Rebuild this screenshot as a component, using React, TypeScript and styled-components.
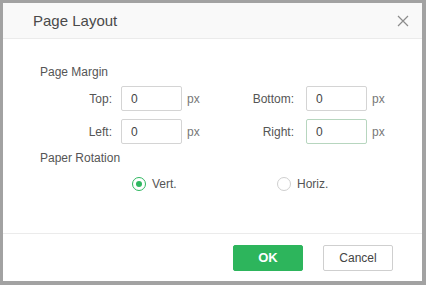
import React, { useState } from 'react';
import styled, { createGlobalStyle } from 'styled-components';

const GlobalStyle = createGlobalStyle`
  html, body {
    margin: 0;
    padding: 0;
    background: #a2a2a2;
    font-family: "Liberation Sans", Arial, sans-serif;
  }
`;

const Screen = styled.div`
  width: 426px;
  height: 285px;
  box-sizing: border-box;
  padding: 3px 4px 4px 3px;
  background: #a2a2a2;
`;

const Dialog = styled.div`
  width: 419px;
  height: 278px;
  background: #fff;
  display: flex;
  flex-direction: column;
`;

const Header = styled.div`
  height: 35px;
  flex: none;
  background: #f9f9f9;
  border-bottom: 1px solid #ebebeb;
  display: flex;
  align-items: center;
  justify-content: space-between;
  padding: 0 13px 0 30px;
  box-sizing: content-box;
`;

const Title = styled.div`
  font-size: 15px;
  color: #4a4a4a;
`;

const Close = styled.button`
  border: none;
  background: none;
  padding: 0;
  width: 12px;
  height: 12px;
  display: flex;
  cursor: pointer;
`;

const Body = styled.div`
  flex: 1;
  padding: 25px 0 0 37px;
`;

const SectionTitle = styled.div<{ $gap?: number }>`
  font-size: 12px;
  line-height: 16px;
  color: #555;
  margin-top: ${(p) => p.$gap ?? 0}px;
`;

const Fields = styled.div`
  margin-top: 6px;
  display: grid;
  grid-template-columns: 81px 61px 40px 84px 61px auto;
  grid-auto-rows: 25px;
  row-gap: 8px;
  align-items: center;
`;

const Label = styled.label<{ $pad: number }>`
  font-size: 12px;
  color: #555;
  text-align: right;
  padding-right: ${(p) => p.$pad}px;
`;

const Input = styled.input<{ $active?: boolean }>`
  width: 61px;
  height: 25px;
  box-sizing: border-box;
  border: 1px solid ${(p) => (p.$active ? '#b7d6bf' : '#d4d4d4')};
  border-radius: 2px;
  padding: 0 0 0 9px;
  font: 12px "Liberation Sans", Arial, sans-serif;
  color: #444;
  outline: none;
`;

const Unit = styled.span`
  font-size: 12px;
  color: #777;
  padding-left: 5px;
`;

const Radios = styled.div`
  margin-top: 10px;
  padding-left: 92px;
  display: flex;
`;

const RadioOption = styled.label`
  width: 147px;
  display: flex;
  align-items: center;
  gap: 6px;
  font-size: 12px;
  color: #555;
  cursor: pointer;
  height: 16px;
`;

const Circle = styled.span<{ $on: boolean }>`
  width: 14px;
  height: 14px;
  box-sizing: border-box;
  border-radius: 50%;
  border: 1px solid ${(p) => (p.$on ? '#2fb760' : '#cfcfcf')};
  display: flex;
  align-items: center;
  justify-content: center;
  &::after {
    content: '';
    width: 6px;
    height: 6px;
    border-radius: 50%;
    background: #2fb760;
    display: ${(p) => (p.$on ? 'block' : 'none')};
  }
`;

const Footer = styled.div`
  height: 47px;
  flex: none;
  border-top: 1px solid #ebebeb;
  display: flex;
  align-items: center;
  justify-content: flex-end;
  gap: 20px;
  padding-right: 29px;
`;

const Button = styled.button<{ $primary?: boolean }>`
  width: 70px;
  height: 26px;
  border-radius: 2px;
  box-sizing: border-box;
  font-family: "Liberation Sans", Arial, sans-serif;
  font-size: ${(p) => (p.$primary ? '13px' : '12px')};
  font-weight: ${(p) => (p.$primary ? 'bold' : 'normal')};
  color: ${(p) => (p.$primary ? '#fff' : '#444')};
  background: ${(p) => (p.$primary ? '#2db55c' : '#fff')};
  border: 1px solid ${(p) => (p.$primary ? '#2db55c' : '#cfcfcf')};
  cursor: pointer;
`;

export default function App() {
  const [rot, setRot] = useState('vert');

  return (
    <>
      <GlobalStyle />
      <Screen>
        <Dialog>
          <Header>
            <Title>Page Layout</Title>
            <Close aria-label="close">
              <svg width="12" height="12" viewBox="0 0 12 12">
                <path d="M1 1L11 11M11 1L1 11" stroke="#8c8c8c" strokeWidth="1.2" />
              </svg>
            </Close>
          </Header>
          <Body>
            <SectionTitle>Page Margin</SectionTitle>
            <Fields>
              <Label $pad={9}>Top:</Label>
              <Input defaultValue="0" />
              <Unit>px</Unit>
              <Label $pad={12}>Bottom:</Label>
              <Input defaultValue="0" />
              <Unit>px</Unit>
              <Label $pad={9}>Left:</Label>
              <Input defaultValue="0" />
              <Unit>px</Unit>
              <Label $pad={12}>Right:</Label>
              <Input defaultValue="0" $active />
              <Unit>px</Unit>
            </Fields>
            <SectionTitle $gap={6}>Paper Rotation</SectionTitle>
            <Radios>
              <RadioOption onClick={() => setRot('vert')}>
                <Circle $on={rot === 'vert'} />
                Vert.
              </RadioOption>
              <RadioOption onClick={() => setRot('horiz')}>
                <Circle $on={rot === 'horiz'} />
                Horiz.
              </RadioOption>
            </Radios>
          </Body>
          <Footer>
            <Button $primary>OK</Button>
            <Button>Cancel</Button>
          </Footer>
        </Dialog>
      </Screen>
    </>
  );
}
